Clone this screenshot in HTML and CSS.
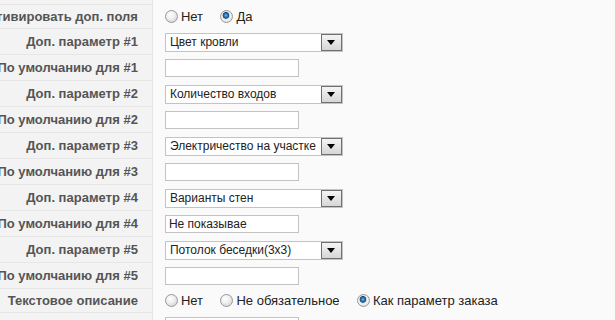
FILE: index.html
```html
<!DOCTYPE html>
<html lang="ru">
<head>
<meta charset="UTF-8">
<title>Доп. поля</title>
<link rel="stylesheet" href="styles.css">
</head>
<body>
<table class="admintable">
    <tr class="row-radio">
        <td class="key">Опубликовано</td>
        <td class="val"></td>
    </tr>
    <tr class="row-radio">
        <td class="key">Активировать доп. поля</td>
        <td class="val">
            <label class="radio"><input type="radio" name="extra"> Нет</label>
            <label class="radio"><input type="radio" name="extra" checked> Да</label>
        </td>
    </tr>
    <tr>
        <td class="key">Доп. параметр #1</td>
        <td class="val"><div class="select"><span class="sel-text">Цвет кровли</span><span class="sel-btn"></span></div></td>
    </tr>
    <tr>
        <td class="key">По умолчанию для #1</td>
        <td class="val"><input type="text" class="inputbox" value=""></td>
    </tr>
    <tr>
        <td class="key">Доп. параметр #2</td>
        <td class="val"><div class="select"><span class="sel-text">Количество входов</span><span class="sel-btn"></span></div></td>
    </tr>
    <tr>
        <td class="key">По умолчанию для #2</td>
        <td class="val"><input type="text" class="inputbox" value=""></td>
    </tr>
    <tr>
        <td class="key">Доп. параметр #3</td>
        <td class="val"><div class="select"><span class="sel-text">Электричество на участке</span><span class="sel-btn"></span></div></td>
    </tr>
    <tr>
        <td class="key">По умолчанию для #3</td>
        <td class="val"><input type="text" class="inputbox" value=""></td>
    </tr>
    <tr>
        <td class="key">Доп. параметр #4</td>
        <td class="val"><div class="select"><span class="sel-text">Варианты стен</span><span class="sel-btn"></span></div></td>
    </tr>
    <tr>
        <td class="key">По умолчанию для #4</td>
        <td class="val"><input type="text" class="inputbox" value="Не показывае"></td>
    </tr>
    <tr>
        <td class="key">Доп. параметр #5</td>
        <td class="val"><div class="select"><span class="sel-text">Потолок беседки(3x3)</span><span class="sel-btn"></span></div></td>
    </tr>
    <tr>
        <td class="key">По умолчанию для #5</td>
        <td class="val"><input type="text" class="inputbox" value=""></td>
    </tr>
    <tr class="row-radio">
        <td class="key">Текстовое описание</td>
        <td class="val">
            <label class="radio"><input type="radio" name="desc"> Нет</label>
            <label class="radio"><input type="radio" name="desc"> Не обязательное</label>
            <label class="radio"><input type="radio" name="desc" checked> Как параметр заказа</label>
        </td>
    </tr>
    <tr>
        <td class="key"></td>
        <td class="val"><input type="text" class="inputbox" value=""></td>
    </tr>
</table>
</body>
</html>
```

FILE: styles.css
```css
body {margin: 0; background: #fafafa; font-family: "Liberation Sans", Arial, sans-serif; font-size: 12px; color: #222; overflow: hidden;}
.admintable {margin: -20px 0 0 -40px; border-collapse: collapse; border-spacing: 0;}
.admintable td {box-sizing: border-box; height: 26px; padding: 0; vertical-align: middle;}
.admintable .row-radio td {height: 24px;}
.admintable td.key {width: 193px; padding-right: 14px; text-align: right; font-size: 13px; font-weight: bold; color: #555; background: #f3f3f3; border-bottom: 1px solid #e6e6e6; border-right: 1px solid #e6e6e6; white-space: nowrap;}
.admintable td.val {width: 470px; padding: 2px 0 0 12px; background: #fafafa;}

.radio {display: inline-flex; align-items: center; margin-right: 14px; font-size: 13px; color: #222; white-space: nowrap;}
.radio input {appearance: none; -webkit-appearance: none; box-sizing: border-box; width: 13px; height: 13px; margin: 0 3px 0 0; border: 1px solid #9a9a9a; border-radius: 50%; background: radial-gradient(circle at 40% 35%, #ffffff 0%, #f0f0f0 40%, #c8c8c8 100%);}
.radio input:checked {background: radial-gradient(circle at 45% 40%, #7cc3f0 0%, #2a7fc4 1.5px, #174a7c 3px, #d8d8d8 3.6px, #f4f4f4 4.5px, #c8c8c8 100%);}

.select {display: flex; box-sizing: border-box; width: 178px; height: 19px; border: 1px solid #c3c3c3; background: #fff;}
.select .sel-text {flex: 1; overflow: hidden; white-space: nowrap; padding-left: 4px; line-height: 17px;}
.select .sel-btn {position: relative; box-sizing: border-box; width: 21px; height: 17px; border: 1px solid #707070; background: linear-gradient(#f4f4f4, #d6d6d6);}
.select .sel-btn::after {content: ""; position: absolute; left: 5px; top: 5px; border-left: 4px solid transparent; border-right: 4px solid transparent; border-top: 5px solid #000;}

.inputbox {box-sizing: border-box; width: 134px; height: 18px; margin: 0; padding: 0 3px; border: 1px solid #c3c3c3; background: #fff; font-family: "Liberation Sans", Arial, sans-serif; font-size: 12px; color: #222; outline: none;}
```
